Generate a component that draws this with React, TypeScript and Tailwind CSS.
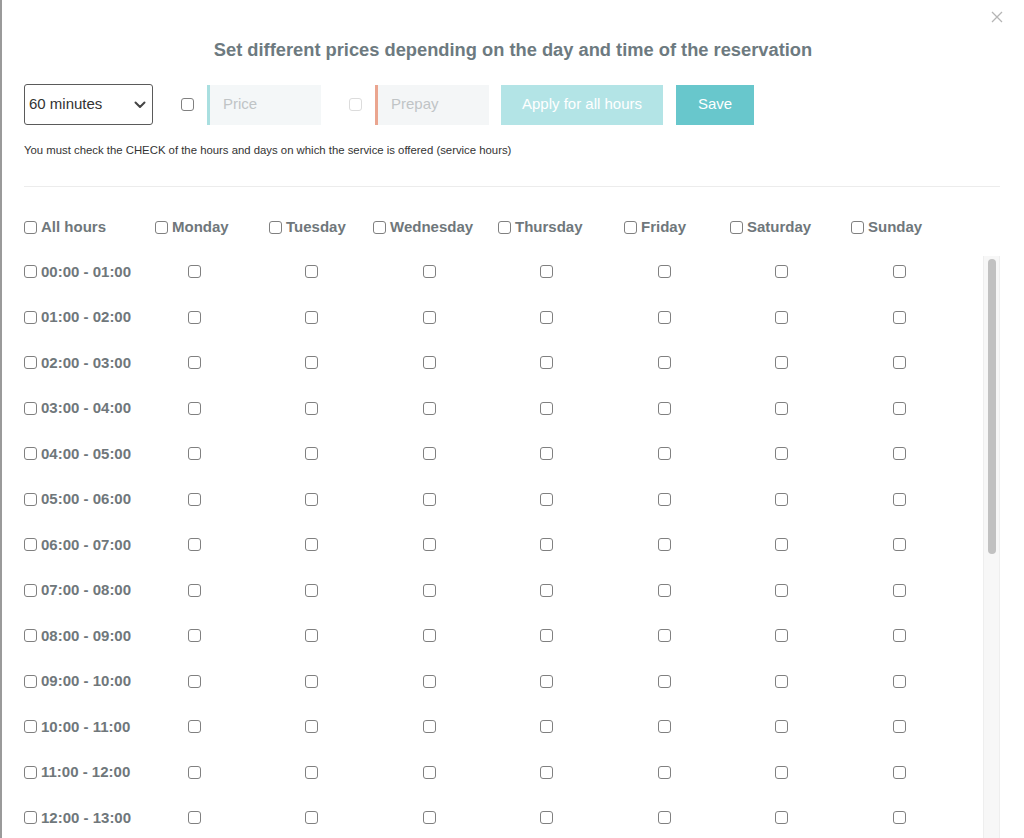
import React from "react";

const days = ["Monday", "Tuesday", "Wednesday", "Thursday", "Friday", "Saturday", "Sunday"];
const headWidths = ["w-[131px]", "w-[114px]", "w-[104px]", "w-[125px]", "w-[126px]", "w-[106px]", "w-[121px]", "w-[120px]"];

const pad = (n: number) => (n < 10 ? "0" + n : "" + n);
const hours = Array.from({ length: 13 }, (_, i) => `${pad(i)}:00 - ${pad(i + 1)}:00`);

function Box({ light = false }: { light?: boolean }) {
  return (
    <input
      type="checkbox"
      readOnly
      className={
        "appearance-none block shrink-0 w-[13px] h-[13px] rounded-[3px] border bg-white m-0 " +
        (light ? "border-[#dcdcdc]" : "border-[#808080]")
      }
    />
  );
}

export default function App() {
  return (
    <div
      className="w-[1024px] h-[838px] overflow-hidden bg-white border-l-2 border-[#9a9a9a] flex flex-col"
      style={{ fontFamily: '"Liberation Sans", Arial, sans-serif' }}
    >
      {/* close */}
      <div className="flex justify-end pr-[21px] pt-[11px] h-[24px]">
        <svg width="12" height="12" viewBox="0 0 12 12" className="block">
          <path d="M1 1L11 11M11 1L1 11" stroke="#b5b5b5" strokeWidth="1.3" />
        </svg>
      </div>
      <h1 className="text-center text-[18.3px] font-bold text-[#6d7a80] mt-[15px] leading-[22px]">
        Set different prices depending on the day and time of the reservation
      </h1>

      {/* controls */}
      <div className="flex items-center mt-[23px] pl-[22px] h-[41px]">
        <div className="w-[129px] h-[41px] border border-[#5a5a5a] rounded-[3px] flex items-center justify-between pl-[4px] pr-[6px]">
          <span className="text-[15px] text-[#333]">60 minutes</span>
          <svg width="12" height="8" viewBox="0 0 12 8" className="block">
            <path d="M1.5 1.5L6 6L10.5 1.5" stroke="#444" strokeWidth="2" fill="none" strokeLinecap="round" strokeLinejoin="round" />
          </svg>
        </div>
        <div className="ml-[28px]">
          <Box />
        </div>
        <div className="ml-[13px] w-[114px] h-[40px] bg-[#f4f7f8] border-l-[3px] border-[#a9dfe0] flex items-center pl-[13px]">
          <span className="text-[15px] text-[#c0c4c6]">Price</span>
        </div>
        <div className="ml-[28px]">
          <Box light />
        </div>
        <div className="ml-[13px] w-[114px] h-[40px] bg-[#f4f6f7] border-l-[3px] border-[#eaa58f] flex items-center pl-[13px]">
          <span className="text-[15px] text-[#c0c4c6]">Prepay</span>
        </div>
        <div className="ml-[12px] w-[162px] h-[40px] bg-[#b3e4e6] flex items-center justify-center">
          <span className="text-[15px] text-white">Apply for all hours</span>
        </div>
        <div className="ml-[13px] w-[78px] h-[40px] bg-[#68c7cc] flex items-center justify-center">
          <span className="text-[15px] text-white">Save</span>
        </div>
      </div>

      <p className="pl-[22px] mt-[18px] text-[11.35px] text-[#333] leading-[14px]">
        You must check the CHECK of the hours and days on which the service is offered (service hours)
      </p>

      <div className="ml-[22px] mr-[24px] mt-[29px] h-px bg-[#ececec]" />

      {/* header */}
      <div className="flex items-center pl-[22px] mt-[31px] h-[18px]">
        {["All hours", ...days].map((d, i) => (
          <div key={d} className={"flex items-center gap-[4px] " + headWidths[i]}>
            <Box />
            <span className="text-[15px] font-bold text-[#6f777b] leading-[18px]">{d}</span>
          </div>
        ))}
      </div>

      {/* body */}
      <div className="flex mt-[20px] pl-[22px] flex-1 min-h-0">
        <div className="flex-1 min-w-0 overflow-hidden">
          {hours.map((h) => (
            <div key={h} className="grid grid-cols-[111.5px_repeat(7,117.5px)] h-[45.5px] items-start pt-[9px]">
              <div className="flex items-center gap-[4px] h-[13px]">
                <Box />
                <span className="text-[15px] font-bold text-[#6f777b] leading-[18px]">{h}</span>
              </div>
              {days.map((d) => (
                <div key={d} className="flex justify-center">
                  <Box />
                </div>
              ))}
            </div>
          ))}
        </div>
        <div className="w-[17px] mr-[24px] bg-[#f7f7f7] border-x border-[#eeeeee] pt-[3px] flex flex-col items-center">
          <div className="w-[8px] h-[295px] rounded-full bg-[#c1c1c1]" />
        </div>
      </div>
    </div>
  );
}
